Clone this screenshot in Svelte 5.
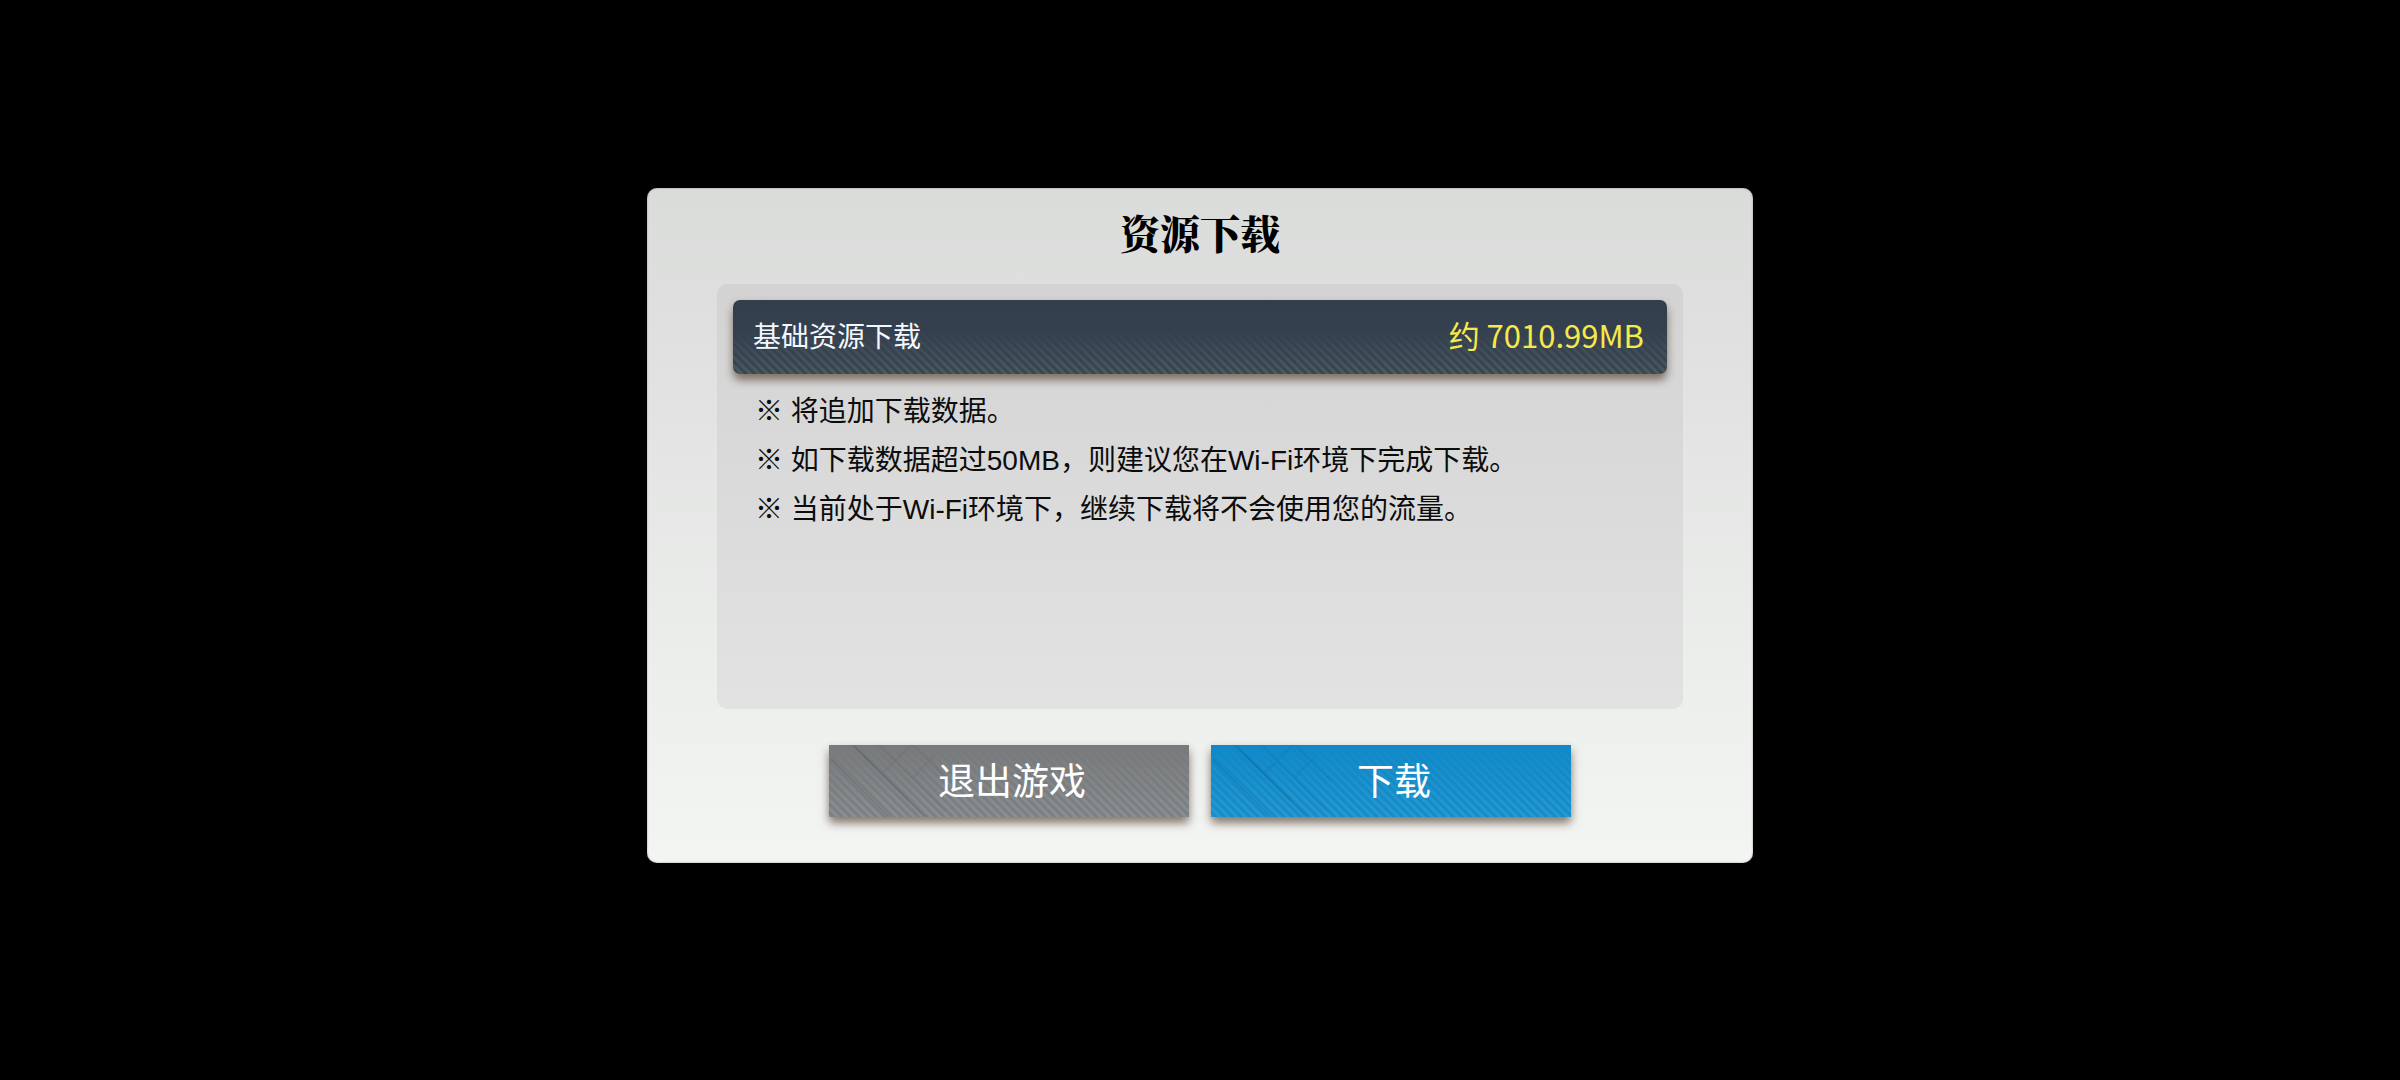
<script>
  const notes = [
    '将追加下载数据。',
    '如下载数据超过50MB，则建议您在Wi-Fi环境下完成下载。',
    '当前处于Wi-Fi环境下，继续下载将不会使用您的流量。',
  ];

  let { size = '7010.99MB', onexit, ondownload } = $props();
</script>

<main class="screen">
  <div class="dialog" role="dialog" aria-labelledby="dialog-title">
    <h1 id="dialog-title">资源下载</h1>

    <section class="panel">
      <div class="bar hatched">
        <span class="bar-label">基础资源下载</span>
        <span class="bar-size">约 {size}</span>
      </div>
      <div class="notes">
        {#each notes as note}
          <p>※ {note}</p>
        {/each}
      </div>
    </section>

    <div class="actions">
      <button class="btn hatched" onclick={onexit}>
        <svg class="scratches" viewBox="0 0 360 72" aria-hidden="true">
          <path d="M2 14L60 72M24 0L96 72" />
          <path class="soft" d="M34 10L80 56M50 0L116 66M84 0L120 36M54 28L82 0M84 32L104 12" />
        </svg>
        <span>退出游戏</span>
      </button>
      <button class="btn primary hatched" onclick={ondownload}>
        <svg class="scratches" viewBox="0 0 360 72" aria-hidden="true">
          <path d="M2 14L60 72M24 0L96 72" />
          <path class="soft" d="M34 10L80 56M50 0L116 66M84 0L120 36M54 28L82 0M84 32L104 12" />
        </svg>
        <span>下载</span>
      </button>
    </div>
  </div>
</main>

<style>
  :global(body) {
    margin: 0;
    background: #000;
  }
  .screen {
    display: flex;
    align-items: center;
    justify-content: center;
    box-sizing: border-box;
    min-height: 100vh;
    padding: 16px 16px 46px;
    font-family: "Noto Sans CJK SC", sans-serif;
  }
  .dialog {
    box-sizing: border-box;
    width: 100%;
    max-width: 1106px;
    padding: 20px 70px 46px;
    border-radius: 10px;
    background: linear-gradient(#dadcda, #dfe0df 22%, #eceeec 70%, #f3f5f3);
    box-shadow: inset 0 0 2px #8c8e8c;
  }
  h1 {
    margin: 0 0 28px;
    font: 900 40px/48px "Noto Serif CJK SC", "Source Han Serif SC", "Noto Sans CJK SC", serif;
    text-align: center;
    color: #000;
  }
  .panel {
    box-sizing: border-box;
    min-height: 425px;
    padding: 16px;
    border-radius: 10px;
    background: linear-gradient(#d3d3d3, #d9d9d9 40%, #e2e2e3);
  }

  /* fine diagonal lines, stronger towards the bottom edge */
  .hatched {
    position: relative;
    box-shadow: 0 7px 9px -1px rgba(90, 66, 48, 0.55), 0 4px 8px rgba(80, 62, 52, 0.3);
  }
  .hatched::before {
    content: '';
    position: absolute;
    inset: 0;
    border-radius: inherit;
    background: repeating-linear-gradient(45deg, var(--hatch) 0 1px, transparent 3px 4px, var(--hatch) 6px);
    mask-image: linear-gradient(transparent var(--hatch-from), #000);
  }
  .hatched > span {
    position: relative;
  }

  .bar {
    --hatch: #4c5c5f;
    --hatch-from: 40%;
    display: flex;
    align-items: center;
    justify-content: space-between;
    box-sizing: border-box;
    height: 74px;
    padding: 0 23px 4px 20px;
    border-radius: 7px;
    background: linear-gradient(#333e4b, #364150 60%, #384451);
  }
  .bar-label {
    font-size: 28px;
    color: #f4f8ff;
  }
  .bar-size {
    font-size: 31px;
    color: #f8e94a;
  }
  .notes {
    padding: 13px 22px 0;
    font: 28px/49px "Liberation Sans", "Noto Sans CJK SC", sans-serif;
    color: #0c0c0c;
  }
  .notes p {
    margin: 0;
  }

  .actions {
    display: flex;
    justify-content: center;
    gap: 22px;
    margin-top: 36px;
  }
  .btn {
    --hatch: #8b9092;
    --hatch-from: 0%;
    flex: 0 1 360px;
    height: 72px;
    padding: 0 0 4px 6px;
    border: none;
    background: linear-gradient(#787a7c, #7b7f81);
    color: #fff;
    font: inherit;
    font-size: 37px;
    cursor: pointer;
  }
  .primary {
    --hatch: #2a9ad1;
    background: linear-gradient(#1189c8, #148cc8);
  }
  .scratches {
    position: absolute;
    left: 0;
    top: 0;
    width: 100%;
    height: 100%;
    fill: none;
    stroke: rgba(20, 40, 60, 0.14);
    stroke-width: 2;
  }
  .soft {
    stroke: rgba(20, 40, 60, 0.06);
  }
</style>
